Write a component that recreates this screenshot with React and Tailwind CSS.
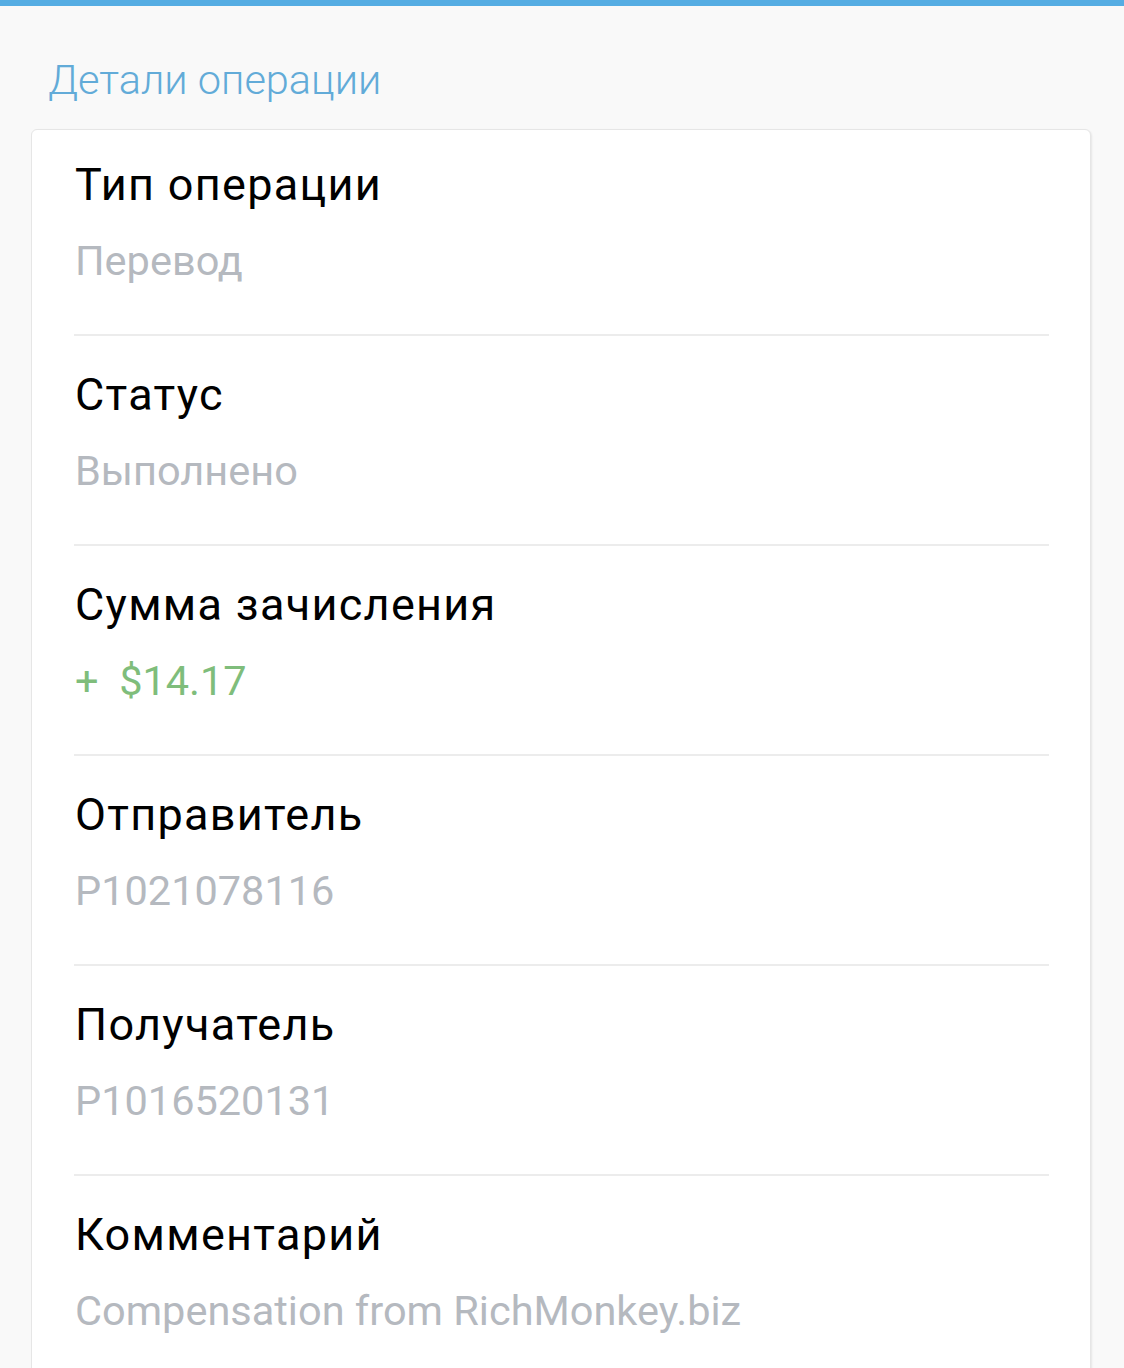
import React from "react";

const rows = [
  { label: "Тип операции", value: "Перевод" },
  { label: "Статус", value: "Выполнено" },
  { label: "Сумма зачисления", value: "+  $14.17", green: true },
  { label: "Отправитель", value: "P1021078116" },
  { label: "Получатель", value: "P1016520131" },
  { label: "Комментарий", value: "Compensation from RichMonkey.biz" },
];

export default function App() {
  return (
    <div className="w-[1124px] h-[1368px] overflow-hidden bg-[#f9f9f9] font-['Roboto',sans-serif]">
      <div className="h-[6px] bg-[#55ade3]" />
      <div className="pl-[48px] pt-[53px] h-[123px]">
        <div className="text-[41.5px] leading-[42px] font-light text-[#62abd8] whitespace-nowrap">
          Детали операции
        </div>
      </div>
      <div className="ml-[31px] w-[1060px] bg-white border border-[#e6e6e6] rounded-[6px] shadow-[1px_1px_2px_rgba(0,0,0,0.08)]">
        {rows.map((r, i) => (
          <div key={i}>
            <div className={`px-[43px] ${i === 0 ? "pt-[30px]" : "pt-[34px]"} pb-[48px]`}>
              <div className="text-[45px] tracking-[1.3px] leading-[50px] text-black whitespace-nowrap">
                {r.label}
              </div>
              <div
                className={`mt-[26px] text-[41.5px] leading-[50px] whitespace-pre ${
                  r.green ? "text-[#7fbd7b]" : "text-[#b5b9bf]"
                }`}
              >
                {r.value}
              </div>
            </div>
            {i < rows.length - 1 && (
              <div className="ml-[42px] mr-[41px] h-[2px] bg-[#ececec]" />
            )}
          </div>
        ))}
      </div>
    </div>
  );
}
